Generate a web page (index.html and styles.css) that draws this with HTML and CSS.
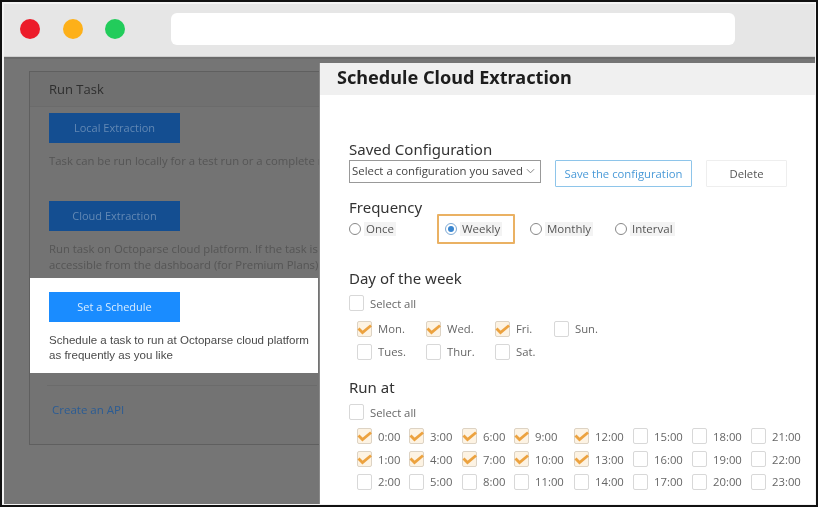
FILE: index.html
```html
<!DOCTYPE html>
<html lang="en">
<head>
<meta charset="utf-8">
<title>Schedule Cloud Extraction</title>
<link rel="stylesheet" href="styles.css">
</head>
<body>
<div class="window">
  <header class="titlebar">
    <span class="dot dot-red"></span>
    <span class="dot dot-yellow"></span>
    <span class="dot dot-green"></span>
    <div class="address"></div>
  </header>
  <main class="stage">
    <section class="card">
      <h2 class="card-head">Run Task</h2>
      <div class="block block-first">
        <div class="btn btn-dim">Local Extraction</div>
        <p class="dim-text">Task can be run locally for a test run or a complete run of the task</p>
      </div>
      <div class="block block-second">
        <div class="btn btn-dim">Cloud Extraction</div>
        <p class="dim-text">Run task on Octoparse cloud platform. If the task is set to run, data is<br>accessible from the dashboard (for Premium Plans)</p>
      </div>
      <div class="highlight">
        <div class="btn btn-bright">Set a Schedule</div>
        <p class="hl-text">Schedule a task to run at Octoparse cloud platform<br>as frequently as you like</p>
      </div>
      <div class="divider"></div>
      <a class="api-link">Create an API</a>
    </section>

    <section class="dialog">
      <h1 class="dialog-head">Schedule Cloud Extraction</h1>
      <div class="form">
        <h3 class="label label-saved">Saved Configuration</h3>
        <div class="config-row">
          <div class="select"><span>Select a configuration you saved</span>
            <svg class="chev" viewBox="0 0 10 6" width="9" height="6"><path d="M1 1l4 4 4-4" fill="none" stroke="#777" stroke-width="1"/></svg>
          </div>
          <div class="cfg-btn cfg-save">Save the configuration</div>
          <div class="cfg-btn cfg-delete">Delete</div>
        </div>
        <h3 class="label label-freq">Frequency</h3>
        <div class="freq-row">
          <div class="radio r-once"><i class="ring"></i><span>Once</span></div>
          <div class="radio r-weekly"><i class="ring on"></i><span>Weekly</span></div>
          <div class="radio r-monthly"><i class="ring"></i><span>Monthly</span></div>
          <div class="radio r-interval"><i class="ring"></i><span>Interval</span></div>
        </div>

        <h3 class="label label-day">Day of the week</h3>
        <div class="check all all-day"><i class="box"></i><span>Select all</span></div>
        <div class="days">
          <div class="check"><i class="box on"><svg class="tick" viewBox="0 0 15 16"><path d="M1.5 7.5L5.5 11.5L14 4.5"/></svg></i><span>Mon.</span></div>
          <div class="check"><i class="box"></i><span>Tues.</span></div>
          <div class="check"><i class="box on"><svg class="tick" viewBox="0 0 15 16"><path d="M1.5 7.5L5.5 11.5L14 4.5"/></svg></i><span>Wed.</span></div>
          <div class="check"><i class="box"></i><span>Thur.</span></div>
          <div class="check"><i class="box on"><svg class="tick" viewBox="0 0 15 16"><path d="M1.5 7.5L5.5 11.5L14 4.5"/></svg></i><span>Fri.</span></div>
          <div class="check"><i class="box"></i><span>Sat.</span></div>
          <div class="check"><i class="box"></i><span>Sun.</span></div>
        </div>

        <h3 class="label label-run">Run at</h3>
        <div class="check all all-run"><i class="box"></i><span>Select all</span></div>
        <div class="times">
          <div class="check"><i class="box on"><svg class="tick" viewBox="0 0 15 16"><path d="M1.5 7.5L5.5 11.5L14 4.5"/></svg></i><span>0:00</span></div>
          <div class="check"><i class="box on"><svg class="tick" viewBox="0 0 15 16"><path d="M1.5 7.5L5.5 11.5L14 4.5"/></svg></i><span>1:00</span></div>
          <div class="check"><i class="box"></i><span>2:00</span></div>
          <div class="check"><i class="box on"><svg class="tick" viewBox="0 0 15 16"><path d="M1.5 7.5L5.5 11.5L14 4.5"/></svg></i><span>3:00</span></div>
          <div class="check"><i class="box on"><svg class="tick" viewBox="0 0 15 16"><path d="M1.5 7.5L5.5 11.5L14 4.5"/></svg></i><span>4:00</span></div>
          <div class="check"><i class="box"></i><span>5:00</span></div>
          <div class="check"><i class="box on"><svg class="tick" viewBox="0 0 15 16"><path d="M1.5 7.5L5.5 11.5L14 4.5"/></svg></i><span>6:00</span></div>
          <div class="check"><i class="box on"><svg class="tick" viewBox="0 0 15 16"><path d="M1.5 7.5L5.5 11.5L14 4.5"/></svg></i><span>7:00</span></div>
          <div class="check"><i class="box"></i><span>8:00</span></div>
          <div class="check"><i class="box on"><svg class="tick" viewBox="0 0 15 16"><path d="M1.5 7.5L5.5 11.5L14 4.5"/></svg></i><span>9:00</span></div>
          <div class="check"><i class="box on"><svg class="tick" viewBox="0 0 15 16"><path d="M1.5 7.5L5.5 11.5L14 4.5"/></svg></i><span>10:00</span></div>
          <div class="check"><i class="box"></i><span>11:00</span></div>
          <div class="check"><i class="box on"><svg class="tick" viewBox="0 0 15 16"><path d="M1.5 7.5L5.5 11.5L14 4.5"/></svg></i><span>12:00</span></div>
          <div class="check"><i class="box on"><svg class="tick" viewBox="0 0 15 16"><path d="M1.5 7.5L5.5 11.5L14 4.5"/></svg></i><span>13:00</span></div>
          <div class="check"><i class="box"></i><span>14:00</span></div>
          <div class="check"><i class="box"></i><span>15:00</span></div>
          <div class="check"><i class="box"></i><span>16:00</span></div>
          <div class="check"><i class="box"></i><span>17:00</span></div>
          <div class="check"><i class="box"></i><span>18:00</span></div>
          <div class="check"><i class="box"></i><span>19:00</span></div>
          <div class="check"><i class="box"></i><span>20:00</span></div>
          <div class="check"><i class="box"></i><span>21:00</span></div>
          <div class="check"><i class="box"></i><span>22:00</span></div>
          <div class="check"><i class="box"></i><span>23:00</span></div>
        </div>
      </div>
    </section>
  </main>
</div>
</body>
</html>
```
FILE: styles.css
```css
* { box-sizing: border-box; }
html, body { margin: 0; padding: 0; }
body { width: 818px; height: 507px; overflow: hidden; background: #fff; font-family: "Open Sans", "Noto Sans", sans-serif; }
h1, h2, h3, p { margin: 0; font-weight: normal; }

.window { width: 818px; height: 507px; border: 2px solid #111; padding: 2px 1px 1px 2px; background: #f4f4f4; display: flex; flex-direction: column; overflow: hidden; filter: blur(0.45px); }

.titlebar { height: 53px; flex: none; background: #e6e6e6; border-bottom: 1px solid #cfcfcf; display: flex; align-items: center; padding: 0 0 3px 16px; }
.dot { width: 20px; height: 20px; border-radius: 50%; flex: none; margin-right: 22.5px; }
.dot-red { background: #ec1c2a; }
.dot-yellow { background: #fdb019; }
.dot-green { background: #22cc5b; }
.address { width: 564px; height: 32px; background: #fff; border-radius: 6px; margin-left: 23px; }

.stage { position: relative; flex: 1; background: #757575; padding: 12px 0 0 25px; border-top: 2px solid #6a6a6a; }

.card { width: 400px; height: 374px; border: 1px solid #5f5f5f; border-right: 0; background: #737373; display: flex; flex-direction: column; }
.card-head { height: 35px; flex: none; background: #707070; border-bottom: 1px solid #6b6b6b; padding: 8px 0 0 19px; font-size: 13px; line-height: 18px; color: #2e2e2e; font-family: "Open Sans", sans-serif; }
.block { padding-left: 19px; white-space: nowrap; flex: none; }
.block-first { padding-top: 6px; height: 94px; }
.block-second { height: 77px; }
.btn { width: 131px; height: 30px; line-height: 29px; text-align: center; font-size: 11px; font-family: "Open Sans", sans-serif; }
.btn-dim { background: #144e91; color: #6288b4; }
.btn-bright { background: #1a8cff; color: #d8ecff; }
.dim-text { margin-top: 10px; font-size: 11.3px; line-height: 16px; color: #555; font-family: "Open Sans", sans-serif; }
.highlight { width: 288px; height: 95px; flex: none; background: #fff; padding: 14px 0 0 19px; white-space: nowrap; }
.hl-text { margin-top: 11px; font-size: 11.55px; line-height: 14.5px; color: #4a4a4a; font-family: "Liberation Sans", sans-serif; }
.divider { width: 270px; margin: 12px 0 0 17px; border-top: 1px solid #6b6b6b; }
.api-link { display: block; margin: 16px 0 0 22px; font-size: 11.5px; line-height: 16px; color: #2b5c94; font-family: "Open Sans", sans-serif; }

.dialog { position: absolute; left: 315px; top: 4px; right: 0; bottom: 0; background: #fff; border-left: 1px solid #8a8a8a; overflow: hidden; }
.dialog-head { height: 32px; background: #f0f0f0; padding: 0 0 0 17px; font-size: 18.1px; font-weight: 700; line-height: 29px; color: #1d1d1d; font-family: "Noto Sans", sans-serif; }
.form { padding: 0 0 0 29px; color: #444; }
.label { font-size: 15px; line-height: 20px; color: #333; font-family: "Noto Sans", sans-serif; }
.label-saved { margin-top: 44px; height: 21px; }
.config-row { display: flex; align-items: flex-start; }
.select { width: 192px; height: 23px; border: 1px solid #999; display: flex; align-items: center; justify-content: space-between; padding: 0 5px 3px 2px; font-size: 11.4px; color: #444; white-space: nowrap; }
.chev { flex: none; margin-top: 2px; }
.cfg-btn { height: 27px; line-height: 26px; text-align: center; font-size: 11.3px; border-radius: 1px; }
.cfg-save { width: 137px; margin-left: 14px; border: 1px solid #8ec5ea; color: #4a9ad8; }
.cfg-delete { width: 81px; margin-left: 14px; border: 1px solid #eee; color: #555; }
.label-freq { margin-top: 10px; }
.freq-row { display: flex; align-items: center; height: 30px; margin-top: -3px; font-size: 11.5px; color: #555; }
.radio { display: flex; align-items: center; white-space: nowrap; height: 30px; }
.radio span { background: #f3f3f3; padding: 0 2px; line-height: 14px; }
.ring { width: 12px; height: 12px; border-radius: 50%; border: 1px solid #888; background: #fff; flex: none; margin-right: 3px; position: relative; }
.ring.on { border-color: #7da9d4; }
.ring.on::after { content: ""; position: absolute; left: 2px; top: 2px; width: 6px; height: 6px; border-radius: 50%; background: #3a86d0; }
.r-once { width: 88px; }
.r-weekly { width: 78px; border: 2px solid #eab163; padding-left: 6px; border-radius: 1px; }
.r-monthly { width: 85px; margin-left: 15px; }

.label-day { margin-top: 24px; }
.all { height: 16px; }
.all-day { margin-top: 7px; }
.all-run { margin-top: 7px; }
.check { display: flex; align-items: center; white-space: nowrap; font-size: 11.3px; color: #666; }
.box { width: 15px; height: 16px; border: 1px solid #d8d8d8; border-radius: 2px; background: #fff; flex: none; margin-right: 6px; position: relative; }
.box.on { background: #fdf3e3; border-color: #ddd3c4; }
.tick { position: absolute; left: -1px; top: -1px; width: 15px; height: 16px; overflow: visible; fill: none; stroke: #eca23f; stroke-width: 2.8; }
.days { margin: 6px 0 0 8px; display: grid; grid-template-columns: 69px 69px 59px auto; grid-template-rows: 23px 23px; grid-auto-flow: column; align-items: center; }
.label-run { margin-top: 14px; }
.times { margin: 5px 0 0 8px; display: grid; grid-template-columns: 52px 53px 52px 60px 59px 59px 59px auto; grid-template-rows: 22.7px 22.7px 22.7px; grid-auto-flow: column; align-items: center; }
```
